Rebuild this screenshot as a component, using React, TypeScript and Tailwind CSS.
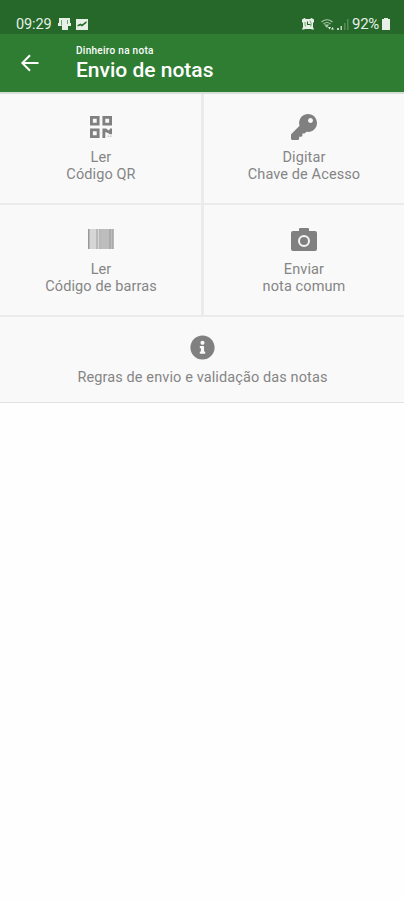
import { ReactNode } from 'react';
import { FaInfoCircle, FaKey } from 'react-icons/fa';

type TileProps = {
  icon: ReactNode;
  lines: string[];
  className?: string;
};

const QrIcon = () => (
  <svg viewBox="0 0 23 23" className="h-[22px] w-[22px]" fill="currentColor">
    <path fillRule="evenodd" d="M0 0h10v10H0zM3 3v4h4V3zM13 0h10v10H13zM16 3v4h4V3zM0 13h10v10H0zM3 16v4h4v-4z" />
    <path d="M13 13h4l2 2h1l1-2h2v6h-2l-2-1-2-1h-1v6h-3z" />
    <path d="M18.500 20.500h1.500v1.500h-1.500zM21 20.500h1.500v1.500H21z" opacity="0.4" />
  </svg>
);

const BarcodeIcon = () => (
  <svg viewBox="0 0 26 20" className="h-5 w-[26px]">
    <path d="M0 0h26v20H0z" fill="#d6d6d6" />
    <path d="M13 0h12v20H13z" fill="#bdbdbd" />
    <path d="M0 0h1.500v20H0zM8.500 0h1v20h-1zM11.500 0h1v20h-1zM21.500 0h1v20h-1zM24.500 0h1v20h-1z" fill="#999" />
  </svg>
);

const CameraIcon = () => (
  <svg viewBox="0 0 26 23" className="h-[23px] w-[26px]" fill="currentColor">
    <path d="M9 0h8q1 0 1 1v2h6q2 0 2 2v16q0 2-2 2H2q-2 0-2-2V5q0-2 2-2h6V1q0-1 1-1z" />
    <circle cx="13" cy="13" r="5" fill="none" stroke="#f5f5f5" strokeWidth="2" />
  </svg>
);

const Tile = ({ icon, lines, className = '' }: TileProps) => (
  <button className={`flex flex-col items-center bg-[#f9f9f9] text-[#808080] ${className}`}>
    <span className="flex h-[26px] items-center">{icon}</span>
    <span className="mt-[9px] text-[14.500px] leading-[17px] tracking-[0.110px] text-[#858585]">
      {lines.map((line) => (
        <span key={line} className="block">{line}</span>
      ))}
    </span>
  </button>
);

const StatusBar = () => (
  <div className="flex h-[34px] items-end justify-between bg-[#256829] pr-[14px] pb-[3px] pl-4 text-sm leading-[14px] text-[#e6f0e6]">
    <div className="flex h-[14px] items-center">
      <span className="w-[36px] pt-px text-[14.500px] tracking-[-0.100px]">09:29</span>
      <svg viewBox="0 0 13 12" className="ml-[6px] h-3 w-[13px]" fill="currentColor">
        <path d="M1 0h11v5h1v3h-3v4H4V8H0V5h1z" />
        <path d="M3.500 2v5.500M9.500 2v4" stroke="#256829" strokeWidth="0.600" />
      </svg>
      <svg viewBox="0 0 12 11" className="ml-[5px] h-[11px] w-3">
        <path d="M0 0h12v11H0z" fill="currentColor" />
        <path d="M1.500 7.500V6L4.500 4.500 6 5.500 10.500 2v2L6 7.500 4.500 6.500z" fill="#256829" />
      </svg>
    </div>
    <div className="flex h-[14px] items-center">
      <svg viewBox="0 0 12 12" className="mr-px h-3 w-3">
        <path d="M0 1.500 2.500 0 4 1h4l1.500-1L12 1.500v2.500l-1 1v4l1 2.500h-2l-1-.5H3l-1 .5H0L1 9V5L0 4z" fill="currentColor" />
        <path d="M5.500 3.500v3h3" fill="none" stroke="#256829" strokeWidth="1.100" />
        <path d="M8 2.700Q10 5.500 8.800 8.500M3.200 4Q2.500 6 3.500 8.500" fill="none" stroke="#256829" strokeWidth="0.600" />
      </svg>
      <svg viewBox="0 0 14 11" className="ml-[6px] h-[11px] w-[14px]">
        <path d="M.5 3Q6 -1.500 11.500 3M2.500 5Q6 2 9.500 5" fill="none" stroke="#a9c8aa" strokeWidth="1.100" />
        <path d="M3 5.500h5L6 9z" fill="#a9c8aa" />
        <path d="m7 8 1.500 2.500L10 8zM10 10.500 11.500 8l1.500 2.500z" fill="currentColor" />
      </svg>
      <svg viewBox="0 0 12 11" className="ml-[2px] h-[11px] w-3">
        <path d="M0 9h2v2H0zM3.500 7h1.500v4H3.500z" fill="#c4d9c5" />
        <path d="M7 4h1.500v7H7zM10 0h1.500v11H10z" fill="#568a59" />
      </svg>
      <span className="ml-[3px] w-[28px] text-[15px] tracking-[-0.300px]">92%</span>
      <svg viewBox="0 0 8 12" className="ml-[2px] h-3 w-2" fill="currentColor">
        <path d="M2 0h4v1h2v11H0V1h2z" />
      </svg>
    </div>
  </div>
);

const AppBar = () => (
  <header className="flex h-[58px] bg-[#2e7d32] text-white">
    <button className="mt-5 ml-[21px] h-[18px] w-[18px]" aria-label="Voltar">
      <svg viewBox="0 0 18 18" fill="none" stroke="currentColor" strokeWidth="2">
        <path d="M17.500 9H1.500M9 1.200 1.300 9 9 16.800" />
      </svg>
    </button>
    <div className="ml-[37px] pt-[10px]">
      <p className="text-[10px] leading-[13px] font-medium tracking-[0.290px]">Dinheiro na nota</p>
      <h1 className="text-[21px] leading-[26px] font-medium">Envio de notas</h1>
    </div>
  </header>
);

const App = () => {
  return (
    <div className="h-[900px] w-[404px] bg-[#fefefe] font-['Roboto',sans-serif]">
      <StatusBar />
      <AppBar />
      <main className="border-t-2 border-b border-t-[#d5dfd5] border-b-[#e2e2e2] bg-[#ebebeb]">
        <div className="grid grid-cols-[201px_1fr] gap-x-[3px] gap-y-[2px]">
          <Tile className="h-[109px] pt-5 pl-px" icon={<QrIcon />} lines={['Ler', 'Código QR']} />
          <Tile className="h-[109px] pt-5" icon={<FaKey size={26} />} lines={['Digitar', 'Chave de Acesso']} />
          <Tile className="h-[110px] pt-[21px] pl-px" icon={<BarcodeIcon />} lines={['Ler', 'Código de barras']} />
          <Tile className="h-[110px] pt-[21px]" icon={<CameraIcon />} lines={['Enviar', 'nota comum']} />
          <Tile className="col-span-2 h-[85px] pt-[17px] pl-px" icon={<FaInfoCircle size={25} />} lines={['Regras de envio e validação das notas']} />
        </div>
      </main>
    </div>
  );
};

export default App;
